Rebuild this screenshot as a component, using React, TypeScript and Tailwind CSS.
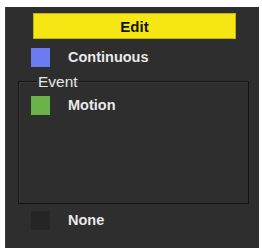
const ITEM_TEXT = "text-[14.5px] font-bold leading-[19px] text-[#e9e9e9]";

const Legend = ({ color, label }: { color: string; label: string }) => (
  <div className="flex items-center gap-[18px] h-[19px]">
    <div className={`w-[19px] h-[19px] ${color}`} />
    <span className={ITEM_TEXT}>{label}</span>
  </div>
);

export default function App() {
  return (
    <div
      className="w-[262px] h-[248px] bg-white pt-[7px] pl-[5px] overflow-hidden"
      style={{ fontFamily: '"Liberation Sans", Arial, sans-serif' }}
    >
      <div className="w-[254px] h-[241px] bg-[#2e2e2e] border-l border-[#3c3c3c] flex flex-col">
        <button className="ml-[27px] mt-[6px] w-[203px] h-[26px] bg-[#f5e614] border border-[#c2b500] text-[15px] font-bold text-[#141414] leading-none">
          Edit
        </button>

        <div className="ml-[25px] mt-[9px]">
          <Legend color="bg-[#6b7cf2]" label="Continuous" />
        </div>

        <fieldset className="ml-[12px] mt-[6px] w-[231px] h-[131px] border border-[#141414] shadow-[inset_1px_1px_0_#3a3a3a]">
          <legend className="ml-[18px] px-[1px] text-[15.5px] leading-[17px] text-[#e6e6e6]">Event</legend>
          <div className="ml-[12px] mt-[6px]">
            <Legend color="bg-[#6cb24a]" label="Motion" />
          </div>
        </fieldset>

        <div className="ml-[25px] mt-[7px]">
          <Legend color="bg-[#252525]" label="None" />
        </div>
      </div>
    </div>
  );
}
